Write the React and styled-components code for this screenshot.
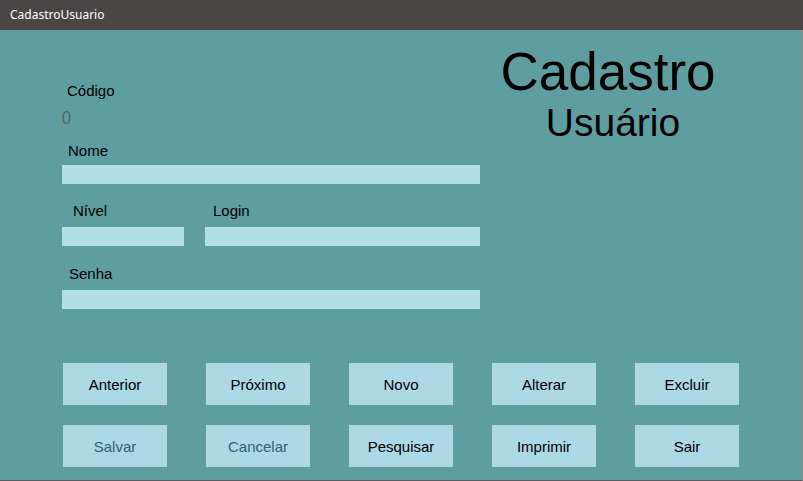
import React from "react";
import styled, { createGlobalStyle } from "styled-components";

const Global = createGlobalStyle`
  html, body { margin: 0; padding: 0; }
  body { width: 803px; height: 481px; overflow: hidden; font-family: "Liberation Sans", Arial, sans-serif; }
  #root { width: 803px; height: 481px; }
`;

const Window = styled.div`
  width: 803px;
  height: 481px;
  display: flex;
  flex-direction: column;
  box-sizing: border-box;
  background: #5f9ea0;
`;

const TitleBar = styled.div`
  height: 30px;
  flex: none;
  background: #494645;
  color: #ffffff;
  font-family: "Noto Sans", "Open Sans", sans-serif;
  font-size: 12px;
  display: flex;
  align-items: center;
  padding-left: 10px;
  padding-bottom: 2px;
  box-sizing: border-box;
`;

const Body = styled.div`
  flex: 1;
  display: flex;
  flex-direction: column;
  border-right: 1px solid #8c8c8c;
  border-bottom: 1px solid #5a5a5a;
  box-sizing: border-box;
`;

const Top = styled.div`
  display: flex;
  align-items: flex-start;
`;

const Form = styled.div`
  width: 418px;
  margin-left: 62px;
  display: flex;
  flex-direction: column;
`;

const Label = styled.div`
  font-size: 15px;
  line-height: 17px;
  color: #000;
  padding-left: ${(p) => p.$indent || 0}px;
  margin-top: ${(p) => p.$top || 0}px;
`;

const Code = styled.div`
  font-size: 19px;
  line-height: 20px;
  color: #566666;
  margin-top: 9px;
  transform: scaleX(0.85);
  transform-origin: left center;
`;

const Field = styled.div`
  height: 19px;
  flex: none;
  background: #b0e0e6;
  margin-top: ${(p) => p.$top || 0}px;
`;

const Row = styled.div`
  display: flex;
  gap: 21px;
  margin-top: ${(p) => p.$top || 0}px;
`;

const Col = styled.div`
  display: flex;
  flex-direction: column;
  flex: ${(p) => (p.$grow ? 1 : "none")};
  width: ${(p) => (p.$width ? p.$width + "px" : "auto")};
`;

const TitleBlock = styled.div`
  width: 260px;
  display: flex;
  flex-direction: column;
  align-items: center;
  margin-top: 15px;
  color: #000;
`;

const BigTitle = styled.div`
  font-size: 53px;
  line-height: 53px;
  margin-right: 4px;
`;

const SubTitle = styled.div`
  font-size: 39px;
  line-height: 39px;
  margin-top: 5px;
  margin-left: 6px;
`;

const Buttons = styled.div`
  display: grid;
  grid-template-columns: repeat(5, 104px);
  grid-auto-rows: 42px;
  column-gap: 39px;
  row-gap: 20px;
  margin-top: 54px;
  margin-left: 63px;
`;

const Button = styled.div`
  background: #add8e6;
  display: flex;
  align-items: center;
  justify-content: center;
  font-size: 15px;
  color: ${(p) => (p.$muted ? "#2f6373" : "#000")};
`;

export default function App() {
  const buttons = [
    ["Anterior"], ["Próximo"], ["Novo"], ["Alterar"], ["Excluir"],
    ["Salvar", true], ["Cancelar", true], ["Pesquisar"], ["Imprimir"], ["Sair"],
  ];
  return (
    <>
      <Global />
      <Window>
        <TitleBar>CadastroUsuario</TitleBar>
        <Body>
          <Top>
            <Form>
              <Label $indent={5} $top={52}>Código</Label>
              <Code>0</Code>
              <Label $indent={6} $top={14}>Nome</Label>
              <Field $top={6} />
              <Row $top={18}>
                <Col $width={122}>
                  <Label $indent={11}>Nível</Label>
                  <Field $top={8} />
                </Col>
                <Col $grow>
                  <Label $indent={8}>Login</Label>
                  <Field $top={8} />
                </Col>
              </Row>
              <Label $indent={7} $top={19}>Senha</Label>
              <Field $top={8} />
            </Form>
            <TitleBlock>
              <BigTitle>Cadastro</BigTitle>
              <SubTitle>Usuário</SubTitle>
            </TitleBlock>
          </Top>
          <Buttons>
            {buttons.map(([t, m]) => (
              <Button key={t} $muted={m}>{t}</Button>
            ))}
          </Buttons>
        </Body>
      </Window>
    </>
  );
}
